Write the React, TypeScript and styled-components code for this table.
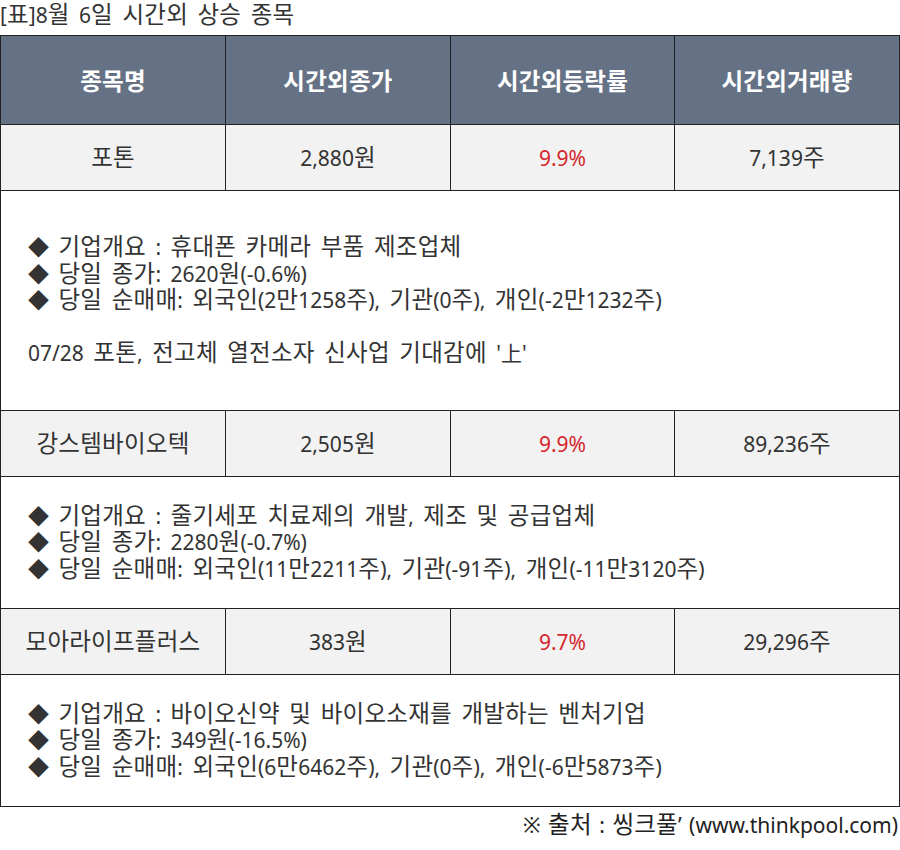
import styled, { createGlobalStyle } from 'styled-components'

const GlobalStyle = createGlobalStyle`
  body {
    margin: 0;
    background: #ffffff;
    font-family: 'Noto Sans', 'Noto Sans CJK KR', sans-serif;
    color: #333333;
  }
`

type Stock = {
  name: string
  close: string
  rate: string
  volume: string
  details: string[]
  news?: string
}

const stocks: Stock[] = [
  {
    name: '포톤',
    close: '2,880원',
    rate: '9.9%',
    volume: '7,139주',
    details: [
      '◆ 기업개요 : 휴대폰 카메라 부품 제조업체',
      '◆ 당일 종가: 2620원(-0.6%)',
      '◆ 당일 순매매: 외국인(2만1258주), 기관(0주), 개인(-2만1232주)',
    ],
    news: "07/28 포톤, 전고체 열전소자 신사업 기대감에 '上'",
  },
  {
    name: '강스템바이오텍',
    close: '2,505원',
    rate: '9.9%',
    volume: '89,236주',
    details: [
      '◆ 기업개요 : 줄기세포 치료제의 개발, 제조 및 공급업체',
      '◆ 당일 종가: 2280원(-0.7%)',
      '◆ 당일 순매매: 외국인(11만2211주), 기관(-91주), 개인(-11만3120주)',
    ],
  },
  {
    name: '모아라이프플러스',
    close: '383원',
    rate: '9.7%',
    volume: '29,296주',
    details: [
      '◆ 기업개요 : 바이오신약 및 바이오소재를 개발하는 벤처기업',
      '◆ 당일 종가: 349원(-16.5%)',
      '◆ 당일 순매매: 외국인(6만6462주), 기관(0주), 개인(-6만5873주)',
    ],
  },
]

// hangul in the reference is drawn larger than the latin digits, so hangul runs get their own size
const Ko = ({ text }: { text: string }) => (
  <>
    {text.split(/([\uAC00-\uD7A3\u3131-\u318E]+)/).map((part, i) =>
      i % 2 === 1 ? <Hangul key={i}>{part}</Hangul> : part,
    )}
  </>
)

const App = () => {
  return (
    <Page>
      <GlobalStyle />
      <Title>
        <Ko text='[표]8월 6일 시간외 상승 종목' />
      </Title>
      <Table>
        <colgroup>
          <col style={{ width: 225 }} />
          <col style={{ width: 225 }} />
          <col style={{ width: 224 }} />
          <col style={{ width: 225 }} />
        </colgroup>
        <thead>
          <tr>
            {['종목명', '시간외종가', '시간외등락률', '시간외거래량'].map((label) => (
              <HeadCell key={label}>
                <Ko text={label} />
              </HeadCell>
            ))}
          </tr>
        </thead>
        <tbody>
          {stocks.map((stock) => (
            <StockGroup key={stock.name} stock={stock} />
          ))}
        </tbody>
      </Table>
      <Source>
        <Ko text='※ 출처 : 씽크풀’ (www.thinkpool.com)' />
      </Source>
    </Page>
  )
}
export default App

const StockGroup = ({ stock }: { stock: Stock }) => (
  <>
    <tr>
      <DataCell>
        <Ko text={stock.name} />
      </DataCell>
      <DataCell>
        <Ko text={stock.close} />
      </DataCell>
      <DataCell $red>{stock.rate}</DataCell>
      <DataCell>
        <Ko text={stock.volume} />
      </DataCell>
    </tr>
    <tr>
      <DetailCell colSpan={4} $tall={!!stock.news}>
        {stock.details.map((line) => (
          <DetailLine key={line}>
            <Ko text={line} />
          </DetailLine>
        ))}
        {stock.news ? (
          <>
            <DetailLine>&nbsp;</DetailLine>
            <DetailLine>
              <Ko text={stock.news} />
            </DetailLine>
          </>
        ) : (
          <></>
        )}
      </DetailCell>
    </tr>
  </>
)

const Page = styled.div`
  width: 900px;
`
// Liberation Sans has no hangul, so glyphs come from Noto CJK while the line box keeps a compact height
const Hangul = styled.span`
  font-family: 'Liberation Sans', 'Noto Sans CJK KR', sans-serif;
  font-size: 1.12em;
  letter-spacing: 0.01em;
`
const Title = styled.div`
  font-size: 21px;
  line-height: 30px;
  height: 35px;
  word-spacing: 4px;
  color: #333333;
`
const Table = styled.table`
  width: 899px;
  border-collapse: collapse;
  table-layout: fixed;
  border: 1px solid #222222;
`
const HeadCell = styled.th`
  height: 89px;
  padding: 0;
  background: #657285;
  color: #ffffff;
  font-size: 21px;
  font-weight: 700;
  text-align: center;
  border: 1px solid #222222;
  box-sizing: border-box;
`
const DataCell = styled.td<{ $red?: boolean }>`
  height: 65px;
  padding: 0;
  background: #f2f2f2;
  color: ${(p) => (p.$red ? '#d6262d' : '#333333')};
  font-size: 21px;
  line-height: 26px;
  text-align: center;
  border: 1px solid #222222;
`
const DetailCell = styled.td<{ $tall?: boolean }>`
  height: ${(p) => (p.$tall ? '219px' : '131px')};
  padding: 0 0 0 27px;
  background: #ffffff;
  border: 1px solid #222222;
  vertical-align: middle;
`
const DetailLine = styled.div`
  font-size: 21px;
  line-height: 26.5px;
  height: 26.5px;
  word-spacing: 4px;
  color: #333333;
  white-space: nowrap;
`
const Source = styled.div`
  text-align: right;
  font-size: 21px;
  line-height: 36px;
  padding-right: 2px;
  word-spacing: 2px;
  color: #222222;
`
